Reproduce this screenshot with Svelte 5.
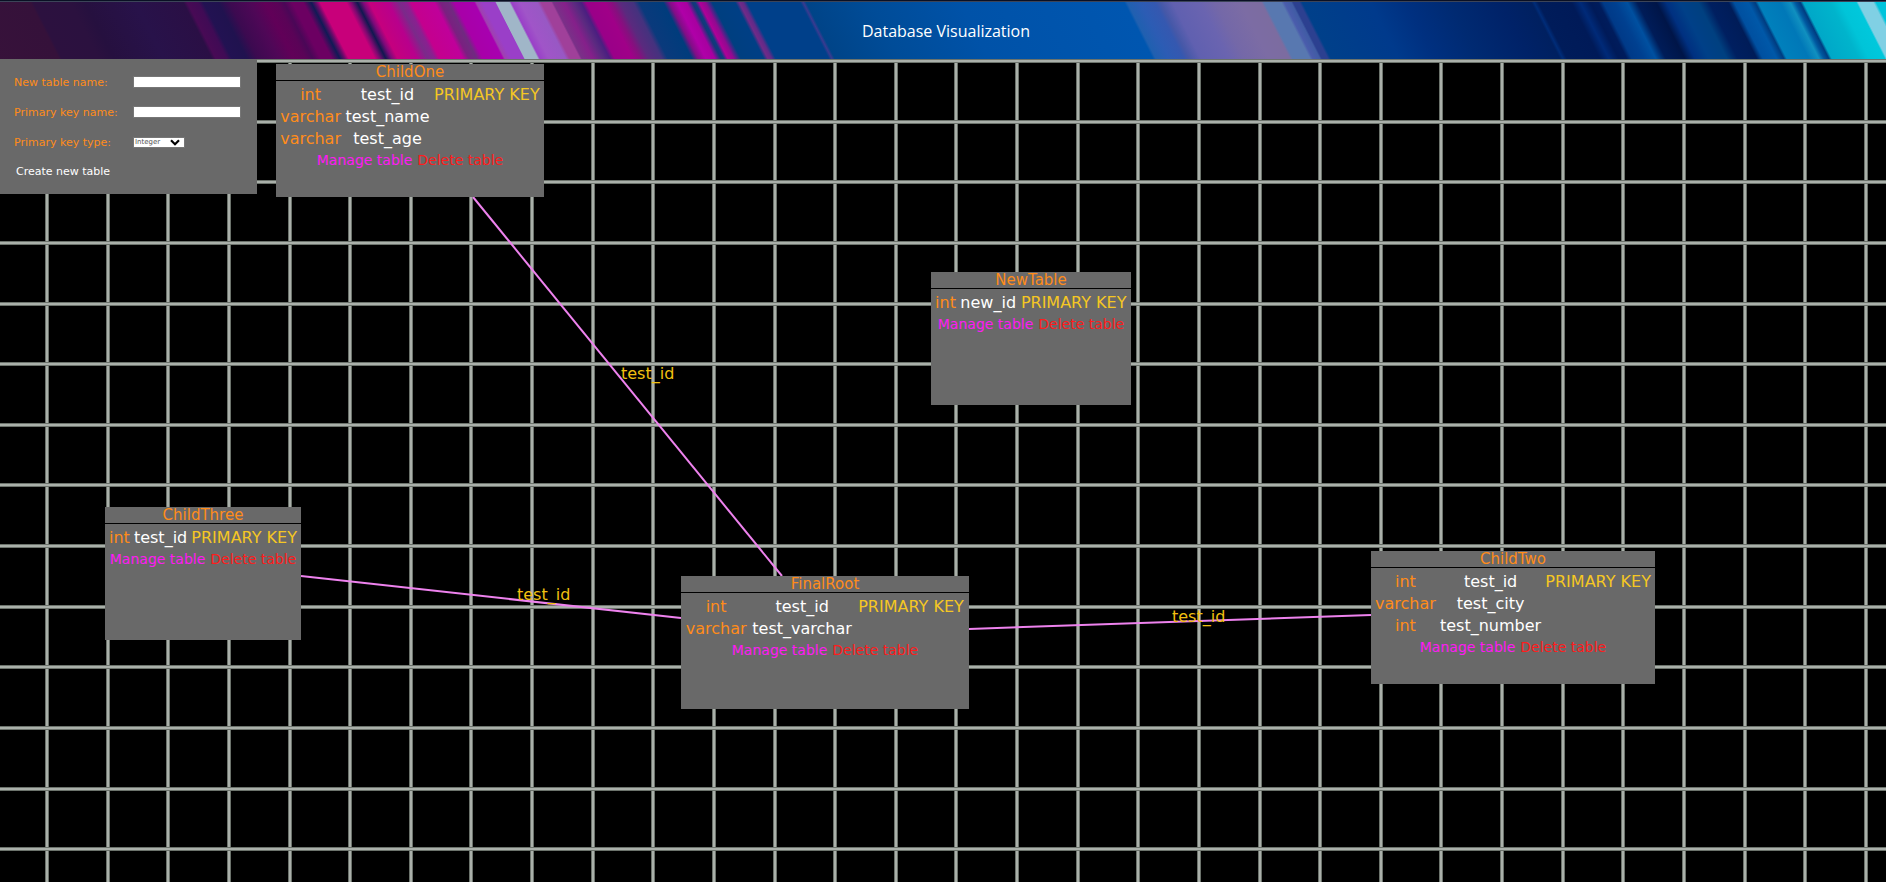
<script>
  const streaks = [
    [-40, '#37123a'], [30, '#35113a'], [33, '#2c113f'], [70, '#2b113f'], [85, '#26103f'], [135, '#28124a'],
    [183, '#2a0f45'], [187, '#480a55'], [198, '#400b55'], [203, '#221252'], [218, '#20124f'], [229, '#3c0a50'],
    [250, '#4f0757'], [265, '#610058'], [277, '#5a0357'], [284, '#4a0757'], [292, '#6c0062'], [303, '#6c0062'],
    [311, '#101a55'], [316, '#6a0b6a'], [320, '#c8007a'], [346, '#c8007a'], [351, '#7c0a70'], [357, '#101850'],
    [363, '#7c0a7a'], [369, '#c5007e'], [388, '#b8008c'], [399, '#7a2a8a'], [406, '#8a2090'], [411, '#c4008e'],
    [434, '#c0009a'], [440, '#7a2080'], [448, '#702a80'], [454, '#a800a8'], [474, '#a800b0'], [476, '#a040b0'],
    [482, '#9a3fc8'], [495, '#9a3fc8'], [496, '#a0b6c8'], [509, '#a0b6c8'], [511, '#9a40c8'], [520, '#a055c8'],
    [537, '#9858c4'], [541, '#a0409a'], [551, '#a0409a'], [553, '#7a3088'], [564, '#85208a'], [574, '#5a2a80'],
    [581, '#4a1f80'], [586, '#9a0088'], [604, '#a00088'], [612, '#85107e'], [620, '#5a2a7e'], [633, '#44327e'],
    [639, '#0a3a7c'], [663, '#003c7c'], [669, '#800e86'], [677, '#b000a8'], [686, '#a800a0'], [692, '#123878'],
    [695, '#103a80'], [699, '#b00098'], [705, '#900a90'], [712, '#003f80'], [735, '#003f85'], [739, '#702a88'],
    [743, '#602a88'], [747, '#00408a'], [800, '#00408a'], [803, '#3a3a90'], [806, '#004488'], [870, '#004c98'],
    [960, '#0052a8'], [1124, '#0056b0'], [1127, '#2060b0'], [1140, '#2c5cb4'], [1155, '#3558b0'],
    [1160, '#4558a8'], [1172, '#6060b0'], [1200, '#6a64b0'], [1215, '#7468a8'], [1240, '#7c6ca4'],
    [1261, '#7c6ca0'], [1264, '#5878b0'], [1281, '#5878b0'], [1284, '#4a5cac'], [1291, '#405ca4'],
    [1293, '#2c4090'], [1299, '#2c4090'], [1302, '#00408a'], [1370, '#003a8c'], [1406, '#003080'],
    [1450, '#002a72'], [1500, '#002268'], [1531, '#002060'], [1534, '#002c78'], [1538, '#001c5a'],
    [1571, '#001a58'], [1580, '#002a78'], [1590, '#001a58'], [1598, '#001c5c'], [1603, '#003a88'],
    [1615, '#004090'], [1627, '#0050a0'], [1637, '#001c58'], [1656, '#001548'], [1666, '#003080'],
    [1680, '#004088'], [1698, '#004080'], [1709, '#001f60'], [1728, '#001c58'], [1734, '#0050a0'],
    [1748, '#0058a8'], [1755, '#003c80'], [1758, '#0080bc'], [1780, '#0078b8'], [1790, '#1090c0'],
    [1795, '#0058a0'], [1800, '#003c80'], [1803, '#00a8c8'], [1830, '#00b4cc'], [1840, '#00c4d8'],
    [1856, '#00c8dc'], [1858, '#80d0e4'], [1873, '#80d0e4'], [1876, '#00c4dc'], [1900, '#00c4dc']
  ];
  const from = streaks[0][0];
  const span = streaks[streaks.length - 1][0] - from;

  // eight grid lines to a 485px tile
  const gridLines = [0, 61, 121, 182, 243, 303, 364, 424];

  const nodes = [
    { name: 'ChildOne', x: 276, y: 5, w: 268, fields: [['int', 'test_id', true], ['varchar', 'test_name'], ['varchar', 'test_age']] },
    { name: 'NewTable', x: 931, y: 213, w: 200, fields: [['int', 'new_id', true]] },
    { name: 'ChildThree', x: 105, y: 448, w: 196, fields: [['int', 'test_id', true]] },
    { name: 'FinalRoot', x: 681, y: 517, w: 288, fields: [['int', 'test_id', true], ['varchar', 'test_varchar']] },
    { name: 'ChildTwo', x: 1371, y: 492, w: 284, fields: [['int', 'test_id', true], ['varchar', 'test_city'], ['int', 'test_number']] }
  ];
  const links = [
    { x1: 473, y1: 138, x2: 782, y2: 517, lx: 621, ly: 306 },
    { x1: 301, y1: 517, x2: 681, y2: 559, lx: 517, ly: 527 },
    { x1: 969, y1: 570, x2: 1371, y2: 556, lx: 1172, ly: 549 }
  ];

  let tableName = $state('');
  let keyName = $state('');
  let keyType = $state('Integer');
</script>

<div class="page">
  <header>
    <svg class="art" viewBox="0 0 1886 57" preserveAspectRatio="none" aria-hidden="true">
      <defs>
        <linearGradient id="streaks" gradientUnits="userSpaceOnUse" x1={from} y1="0" x2={from + span} y2="0">
          {#each streaks as [x, color]}
            <stop offset={(x - from) / span} stop-color={color} />
          {/each}
        </linearGradient>
      </defs>
      <rect x="-60" y="0" width="2000" height="57" fill="url(#streaks)" transform="skewX(27)" />
    </svg>
    <h1>Database Visualization</h1>
  </header>

  <main>
    <svg class="wires" aria-hidden="true">
      <defs>
        <pattern id="cols" x="45" y="0" width="485" height="10" patternUnits="userSpaceOnUse">
          {#each gridLines as x}
            <rect {x} y="0" width="4" height="10" fill="#6c736c" />
            <rect x={x + 1} y="0" width="2" height="10" fill="#aab0aa" />
          {/each}
        </pattern>
        <pattern id="rows" x="0" y="0" width="10" height="485" patternUnits="userSpaceOnUse">
          {#each gridLines as y}
            <rect x="0" {y} width="10" height="4" fill="#6c736c" />
            <rect x="0" y={y + 1} width="10" height="2" fill="#aab0aa" />
          {/each}
        </pattern>
      </defs>
      <rect width="100%" height="100%" fill="url(#cols)" />
      <rect width="100%" height="100%" fill="url(#rows)" />
      {#each links as l}
        <line x1={l.x1} y1={l.y1} x2={l.x2} y2={l.y2} stroke="#ee82ee" stroke-width="2" />
      {/each}
    </svg>

    {#each links as l}
      <span class="link-label" style="left:{l.lx}px;top:{l.ly}px">test_id</span>
    {/each}

    {#each nodes as n}
      <section class="node" style="left:{n.x}px;top:{n.y}px;width:{n.w}px">
        <h2>{n.name}</h2>
        <table>
          <tbody>
            {#each n.fields as [type, field, primary]}
              <tr>
                <td class="type">{type}</td>
                <td class="field">{field}</td>
                {#if primary}<td class="key">PRIMARY KEY</td>{/if}
              </tr>
            {/each}
          </tbody>
        </table>
        <div class="actions">
          <button type="button" class="manage">Manage table</button>
          <button type="button" class="delete">Delete table</button>
        </div>
      </section>
    {/each}

    <form onsubmit={(e) => e.preventDefault()}>
      <label for="table-name">New table name:</label>
      <input id="table-name" type="text" bind:value={tableName} />
      <label for="key-name">Primary key name:</label>
      <input id="key-name" type="text" bind:value={keyName} />
      <label for="key-type">Primary key type:</label>
      <div class="pick">
        <select id="key-type" bind:value={keyType}>
          <option>Integer</option>
          <option>Varchar</option>
        </select>
        <svg viewBox="0 0 10 7" aria-hidden="true"><path d="M1 1.2 5 5.2 9 1.2" fill="none" stroke="#000" stroke-width="2.2" /></svg>
      </div>
      <button type="submit">Create new table</button>
    </form>
  </main>
</div>

<style>
  :global(body) {
    margin: 0;
    background: #0a1024;
  }
  .page {
    height: 100vh;
    display: flex;
    flex-direction: column;
    overflow: hidden;
    font-family: 'DejaVu Sans', sans-serif;
    font-size: 16px;
  }
  header {
    flex: none;
    display: grid;
    place-items: center;
    height: 57px;
    border-top: 1px solid #3c4458;
    margin-top: 1px;
  }
  .art,
  h1 {
    grid-area: 1 / 1;
  }
  .art {
    width: 100%;
    height: 57px;
    display: block;
  }
  h1 {
    margin: 0;
    padding-left: 6px;
    z-index: 1;
    font: 400 16px/24px 'Open Sans', sans-serif;
    color: #fff;
  }
  main {
    flex: 1;
    position: relative;
    background: #000;
  }
  .wires {
    position: absolute;
    inset: 0;
    width: 100%;
    height: 100%;
  }
  .link-label {
    position: absolute;
    line-height: 18px;
    color: #f2c010;
  }
  .node {
    position: absolute;
    min-height: 133px;
    background: #696969;
  }
  h2 {
    margin: 0;
    border-bottom: 1px solid #000;
    font-size: 15px;
    font-weight: 400;
    line-height: 16px;
    text-align: center;
    color: #ff8c1a;
  }
  table {
    width: 100%;
    border-spacing: 2px;
    padding: 1px 1px 0;
    margin-top: 1px;
    white-space: nowrap;
  }
  td {
    padding: 1px;
    line-height: 18px;
    text-align: center;
  }
  .type {
    color: #ff8c1a;
  }
  .field {
    color: #fff;
  }
  .key {
    color: #f5c723;
  }
  button {
    border: 0;
    padding: 0;
    background: none;
    font-family: inherit;
    cursor: pointer;
  }
  .actions {
    display: flex;
    justify-content: center;
    gap: 5px;
    white-space: nowrap;
  }
  .actions button {
    font-size: 14px;
    line-height: 18px;
  }
  .manage {
    color: #ff19f4;
  }
  .delete {
    color: #ff1c1c;
  }
  form {
    position: relative;
    display: grid;
    grid-template-columns: 119px 108px;
    grid-template-rows: repeat(3, 30px) 28px;
    align-items: center;
    width: max-content;
    padding: 8px 16px 9px 14px;
    background: #696969;
    font-size: 11px;
  }
  label {
    color: #ff8c1a;
  }
  input {
    box-sizing: border-box;
    width: 108px;
    height: 12px;
    padding: 0 2px;
    border: 1px solid #767676;
    background: #fff;
    font: 9px 'DejaVu Sans', sans-serif;
  }
  .pick {
    position: relative;
    width: 52px;
    height: 11px;
  }
  select {
    display: block;
    box-sizing: border-box;
    width: 52px;
    height: 11px;
    padding: 0 0 0 1px;
    border: 1px solid #767676;
    border-radius: 0;
    appearance: none;
    background: #fff;
    color: #555;
    font: 7px/9px 'DejaVu Sans', sans-serif;
  }
  .pick svg {
    position: absolute;
    right: 5px;
    top: 2px;
    width: 10px;
    height: 7px;
    pointer-events: none;
  }
  form button {
    grid-column: 1 / -1;
    justify-self: start;
    padding-left: 2px;
    font-size: 11px;
    color: #fff;
  }
</style>
